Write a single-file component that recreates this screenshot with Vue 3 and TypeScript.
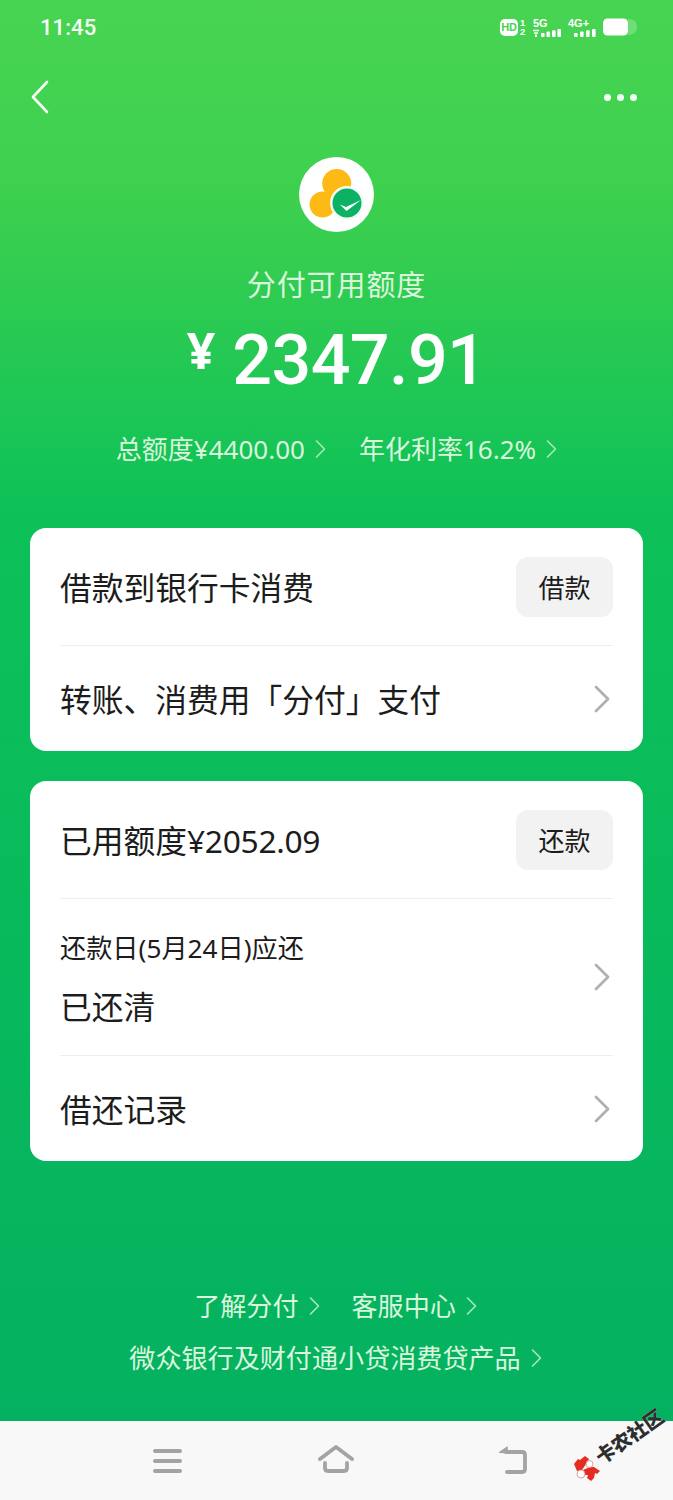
<template>
  <div class="screen">
    <main class="content">
      <div class="status-bar">
        <span class="time">11:45</span>
        <div class="status-icons">
          <span class="hd">HD</span>
          <span class="sim"><i>1</i><i>2</i></span>
          <div class="signal five">
            <span class="net">5G</span>
            <svg width="29" height="8" viewBox="0 0 29 8">
              <path d="M1 1.5h6M2 4h4" stroke="#fff" stroke-width="1.6" />
              <rect x="3" y="5.5" width="2" height="2.5" fill="#fff" />
              <rect x="9" y="4" width="3.6" height="4" rx="1" fill="#fff" />
              <rect x="14.5" y="2.6" width="3.6" height="5.4" rx="1" fill="#fff" />
              <rect x="20" y="1.2" width="3.6" height="6.8" rx="1" fill="#fff" />
              <rect x="25.4" y="0" width="3.6" height="8" rx="1" fill="#fff" />
            </svg>
          </div>
          <div class="signal four">
            <span class="net">4G+</span>
            <svg width="22" height="8" viewBox="0 0 22 8">
              <rect x="0" y="4" width="3.6" height="4" rx="1" fill="#fff" />
              <rect x="6" y="2.6" width="3.6" height="5.4" rx="1" fill="#fff" />
              <rect x="12" y="1.2" width="3.6" height="6.8" rx="1" fill="#fff" />
              <rect x="18" y="0" width="3.6" height="8" rx="1" fill="#fff" />
            </svg>
          </div>
          <svg class="battery" width="34" height="18" viewBox="0 0 34 18">
            <rect x="0" y="0.5" width="25" height="17" rx="4.5" fill="#fff" />
            <path d="M25 1h1c3 0 8 2 8 8s-5 8-8 8h-1z" fill="#fff" opacity="0.22" />
          </svg>
        </div>
      </div>

      <div class="nav-row">
        <svg width="20" height="34" viewBox="0 0 20 34" fill="none">
          <path d="M17 2 3 17l14 15" stroke="#fff" stroke-width="2.6" stroke-linecap="round" stroke-linejoin="round" opacity="0.95" />
        </svg>
        <div class="more"><span></span><span></span><span></span></div>
      </div>

      <div class="hero">
        <svg class="logo" width="75" height="75" viewBox="0 0 75 75">
          <circle cx="37.5" cy="37.5" r="37.5" fill="#fff" />
          <circle cx="37.7" cy="26.5" r="14.5" fill="#fdb914" />
          <circle cx="23.5" cy="47.5" r="13" fill="#fdb914" />
          <circle cx="48" cy="46" r="17" fill="#f2fbf3" />
          <circle cx="48" cy="46" r="14.5" fill="#0cb263" />
          <path d="M41 47.5l6 2.5 15-7-14.5 11z" fill="#fff" />
        </svg>
        <div class="hero-title">分付可用额度</div>
        <div class="amount"><span class="currency">¥</span><span class="number">2347.91</span></div>
        <div class="hero-links">
          <span class="link">总额度¥4400.00<svg class="chev" width="11" height="20" viewBox="0 0 11 20" fill="none"><path d="M1.5 2l8 8-8 8" /></svg></span>
          <span class="link">年化利率16.2%<svg class="chev" width="11" height="20" viewBox="0 0 11 20" fill="none"><path d="M1.5 2l8 8-8 8" /></svg></span>
        </div>
      </div>

      <section class="card first">
        <div class="row tall">
          <span class="row-text">借款到银行卡消费</span>
          <button class="action">借款</button>
        </div>
        <div class="row short">
          <span class="row-text">转账、消费用「分付」支付</span>
          <svg class="row-arrow" width="17" height="28" viewBox="0 0 17 28" fill="none"><path d="M2 2l12 12L2 26" /></svg>
        </div>
      </section>

      <section class="card second">
        <div class="row tall">
          <span class="row-text">已用额度<span class="tight">¥2052.09</span></span>
          <button class="action">还款</button>
        </div>
        <div class="row due">
          <div class="due-text">
            <span class="due-label">还款日(5月24日)应还</span>
            <span class="row-text">已还清</span>
          </div>
          <svg class="row-arrow" width="17" height="28" viewBox="0 0 17 28" fill="none"><path d="M2 2l12 12L2 26" /></svg>
        </div>
        <div class="row short">
          <span class="row-text">借还记录</span>
          <svg class="row-arrow" width="17" height="28" viewBox="0 0 17 28" fill="none"><path d="M2 2l12 12L2 26" /></svg>
        </div>
      </section>

      <footer class="foot">
        <div class="foot-line">
          <span class="link">了解分付<svg class="chev" width="11" height="20" viewBox="0 0 11 20" fill="none"><path d="M1.5 2l8 8-8 8" /></svg></span>
          <span class="link">客服中心<svg class="chev" width="11" height="20" viewBox="0 0 11 20" fill="none"><path d="M1.5 2l8 8-8 8" /></svg></span>
        </div>
        <div class="foot-line">
          <span class="link">微众银行及财付通小贷消费贷产品<svg class="chev" width="11" height="20" viewBox="0 0 11 20" fill="none"><path d="M1.5 2l8 8-8 8" /></svg></span>
        </div>
      </footer>
    </main>

    <nav class="sys-nav">
      <svg width="30" height="26" viewBox="0 0 30 26" fill="none" stroke="#a3a3a3" stroke-width="4" stroke-linecap="round">
        <path d="M2 3h25M2 13h25M2 23h25" />
      </svg>
      <svg width="36" height="28" viewBox="0 0 36 28" fill="none" stroke="#a3a3a3" stroke-width="3.8" stroke-linecap="round" stroke-linejoin="round">
        <path d="M2 14 18 2l16 12" />
        <path d="M7 18v5c0 2 1 3 3 3h16c2 0 3-1 3-3v-5" />
      </svg>
      <svg width="30" height="28" viewBox="0 0 30 28" stroke-linecap="round" stroke-linejoin="round">
        <path d="M9 1 1 6.5l8 .5z" fill="#a3a3a3" stroke="#a3a3a3" stroke-width="1" />
        <path d="M8 6h16c2 0 3 1 3 3v14c0 2-1 3-3 3H9" fill="none" stroke="#a3a3a3" stroke-width="3.8" />
      </svg>
    </nav>

    <div class="watermark">
      <svg width="26" height="26" viewBox="0 0 26 26">
        <path d="M0 9 4 4l2 1 5-4 4 3-3 5-4 6-5 1zM9 15l7-3 4 0 6 4-3 3-2-1-1 5-3 3-4-3 1-3-4 0z" fill="#e62c20" />
        <circle cx="15.500" cy="9" r="3.500" fill="#fff" stroke="#c98f96" stroke-width="0.8" />
        <circle cx="7" cy="19" r="4" fill="#fff" stroke="#c98f96" stroke-width="0.8" />
      </svg>
      <span class="wm-text">卡农社区</span>
    </div>
  </div>
</template>

<script setup lang="ts">
</script>

<style>
html,
body {
  margin: 0;
  background: #f8f8f8;
}
</style>

<style scoped>
.screen {
  position: relative;
  width: 673px;
  height: 1500px;
  overflow: hidden;
  display: flex;
  flex-direction: column;
  font-family: "Noto Sans", "Noto Sans CJK SC", sans-serif;
}

.content {
  height: 1421px;
  box-sizing: border-box;
  background: linear-gradient(180deg, #48d452 0%, #3dd04f 14%, #0dc158 36%, #04b160 100%);
  display: flex;
  flex-direction: column;
}

.status-bar {
  height: 54px;
  padding: 0 36px 0 40px;
  display: flex;
  align-items: center;
  justify-content: space-between;
  color: #fff;
}

.time {
  font-family: "Roboto", sans-serif;
  font-size: 22px;
  font-weight: 500;
  letter-spacing: 0.1px;
  opacity: 0.95;
}

.status-icons {
  display: flex;
  align-items: center;
}

.hd {
  width: 18px;
  height: 17px;
  background: #fff;
  border-radius: 5px;
  color: #46d250;
  font-family: "Liberation Sans", sans-serif;
  font-size: 11px;
  font-weight: 700;
  line-height: 17px;
  text-align: center;
  letter-spacing: -0.3px;
}

.sim {
  display: flex;
  flex-direction: column;
  width: 6px;
  margin-left: 2px;
}

.sim i {
  font: 700 9.5px/9px "Liberation Sans", sans-serif;
}

.signal {
  display: flex;
  flex-direction: column;
  height: 19px;
}

.signal svg {
  display: block;
}

.net {
  font: 700 11px/11px "Liberation Sans", sans-serif;
}

.five {
  margin-left: 6px;
  width: 29px;
}

.five .net {
  margin-left: 1px;
}

.four {
  margin-left: 7px;
  width: 28px;
}

.four svg {
  margin-left: 6px;
}

.battery {
  margin-left: 7px;
}

.nav-row {
  height: 34px;
  margin-top: 26px;
  padding: 0 36px 0 30px;
  display: flex;
  align-items: center;
  justify-content: space-between;
}

.nav-row svg {
  display: block;
}

.more {
  display: flex;
  gap: 6px;
}

.more span {
  width: 7px;
  height: 7px;
  border-radius: 50%;
  background: #f4fff4;
}

.hero {
  display: flex;
  flex-direction: column;
  align-items: center;
  color: #fff;
}

.logo {
  display: block;
  margin-top: 43px;
}

.hero-title {
  margin-top: 33px;
  font-size: 29px;
  line-height: 40px;
  letter-spacing: 0.9px;
  color: #d9f6dd;
}

.amount {
  display: flex;
  align-items: flex-start;
  margin-top: 11px;
  height: 88px;
  color: #fff;
}

.currency {
  font-family: "Noto Sans", sans-serif;
  font-size: 50px;
  font-weight: 700;
  line-height: 68px;
  margin-right: 17px;
}

.number {
  font-family: "Roboto", sans-serif;
  font-size: 70px;
  font-weight: 500;
  line-height: 88px;
  letter-spacing: -0.6px;
}

.hero-links {
  display: flex;
  gap: 33px;
  margin-top: 27px;
  line-height: 36px;
}

.link {
  display: inline-flex;
  align-items: center;
  gap: 10px;
  font-size: 26px;
  line-height: 36px;
  color: #d9f6dd;
}

.chev {
  display: block;
}

.chev path {
  stroke: #a9e8bb;
  stroke-width: 1.6;
  stroke-linecap: round;
  stroke-linejoin: round;
}

.card {
  margin: 0 30px;
  padding: 0 30px;
  background: #fff;
  border-radius: 16px;
}

.first {
  margin-top: 61px;
}

.second {
  margin-top: 30px;
}

.row {
  display: flex;
  align-items: center;
  justify-content: space-between;
  border-bottom: 1px solid #eeeeee;
  box-sizing: border-box;
}

.row:last-child {
  border-bottom: 0;
}

.tall {
  height: 118px;
}

.short {
  height: 105px;
}

.due {
  height: 157px;
}

.row-text {
  padding-top: 3px;
  font-size: 31.75px;
  line-height: 44px;
  color: #1c1c1c;
}

.tight {
  letter-spacing: -0.3px;
}

.action {
  width: 97px;
  height: 60px;
  padding: 0;
  border: 0;
  border-radius: 12px;
  background: #f2f2f2;
  font-family: inherit;
  font-size: 26px;
  color: #1c1c1c;
}

.row-arrow {
  display: block;
  margin-right: 2px;
}

.row-arrow path {
  stroke: #b0b0b0;
  stroke-width: 2.8;
  stroke-linecap: round;
  stroke-linejoin: round;
}

.due-text {
  display: flex;
  flex-direction: column;
  gap: 16px;
  padding-top: 4px;
}

.due-label {
  font-size: 26.2px;
  line-height: 36px;
  color: #1c1c1c;
}

.foot {
  margin-top: 127px;
  display: flex;
  flex-direction: column;
  gap: 16px;
  align-items: center;
}

.foot-line {
  display: flex;
  gap: 32px;
  padding-right: 2px;
}

.foot-line .link {
  font-size: 26.1px;
}

.sys-nav {
  flex: 1;
  background: #f8f8f8;
  position: relative;
}

.sys-nav svg {
  position: absolute;
  display: block;
}

.sys-nav svg:nth-child(1) {
  left: 153px;
  top: 27px;
}

.sys-nav svg:nth-child(2) {
  left: 318px;
  top: 24px;
}

.sys-nav svg:nth-child(3) {
  left: 498px;
  top: 25px;
}

.watermark {
  position: absolute;
  left: 574px;
  top: 1410px;
  width: 99px;
  height: 72px;
}

.watermark svg {
  position: absolute;
  left: 0;
  top: 45px;
}

.wm-text {
  position: absolute;
  left: 16px;
  top: 16px;
  width: 78px;
  font-family: "Noto Sans CJK SC", sans-serif;
  font-size: 19.5px;
  font-weight: 900;
  line-height: 20px;
  white-space: nowrap;
  color: #2e2e2e;
  text-shadow: 0 0 1px rgba(255, 255, 255, 0.6);
  transform: rotate(-35deg);
}
</style>
